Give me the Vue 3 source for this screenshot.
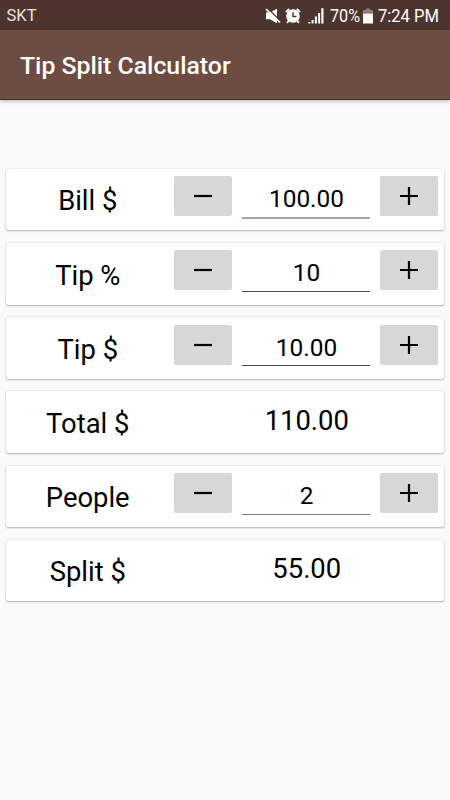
<script setup>
import { computed, ref } from "vue";

const bill = ref(100);
const percent = ref(10);
const people = ref(2);

const tip = computed(() => (bill.value * percent.value) / 100);
const total = computed(() => bill.value + tip.value);

const rows = computed(() => [
  { id: "bill", label: "Bill $", value: bill.value.toFixed(2), editable: true },
  { id: "percent", label: "Tip %", value: String(percent.value), editable: true },
  { id: "tip", label: "Tip $", value: tip.value.toFixed(2), editable: true },
  { id: "total", label: "Total $", value: total.value.toFixed(2) },
  { id: "people", label: "People", value: String(people.value), editable: true },
  { id: "split", label: "Split $", value: (total.value / people.value).toFixed(2) },
]);

function step(id, delta) {
  if (id === "bill") bill.value = Math.max(0, bill.value + delta);
  if (id === "percent") percent.value = Math.max(0, percent.value + delta);
  if (id === "people") people.value = Math.max(1, people.value + delta);
  if (id === "tip" && bill.value > 0) {
    percent.value = (Math.max(0, tip.value + delta) / bill.value) * 100;
  }
}
</script>

<template>
  <div class="screen">
    <div class="status-bar">
      <span class="carrier">SKT</span>
      <svg class="icon-mute" viewBox="0 0 16 16">
        <path d="M1 4.500h4L12 .8v14.400L5 11.200H1z" fill="#fff" />
        <path d="M2.800 .2l13 13.300" stroke="#4e342e" stroke-width="1.200" />
        <path d="M1 1.200l14 13.300" stroke="#fff" stroke-width="1.700" fill="none" />
      </svg>
      <svg class="icon-alarm" viewBox="0 0 16 16">
        <path
          d="M.8 4.200L4.200 1M11.800 1l3.400 3.200M3.800 12.800l-1.800 2M12.200 12.800l1.800 2"
          stroke="#fff"
          stroke-width="1.800"
        />
        <circle cx="8" cy="8" r="6.800" fill="#fff" />
        <path d="M8 4.300v4.200h3.500" stroke="#4e342e" stroke-width="1.400" fill="none" />
      </svg>
      <svg class="icon-signal" viewBox="0 0 16 16">
        <path
          d="M.3 14h2v1.500h-2zM3.600 12h2v3.500h-2zM6.900 8.500h2v7h-2zM10.100 5h2v10.500h-2zM13.300.3h2.200v15.200h-2.200z"
          fill="#fff"
        />
      </svg>
      <span class="battery-level">70%</span>
      <svg class="icon-battery" viewBox="0 0 10 16">
        <path d="M3 .5h4V2h3v4H0V2h3z" fill="#947f7a" />
        <path d="M0 5.700h10V15.500H0z" fill="#fff" />
      </svg>
      <span class="clock">7:24 PM</span>
    </div>

    <header class="app-bar">
      <h1>Tip Split Calculator</h1>
    </header>

    <main class="cards">
      <section v-for="row in rows" :key="row.id" class="card">
        <div class="label">{{ row.label }}</div>
        <template v-if="row.editable">
          <button class="btn" aria-label="Decrease" @click="step(row.id, -1)">
            <svg viewBox="0 0 18 18"><path d="M0 9h18" /></svg>
          </button>
          <div class="field" :class="row.id">{{ row.value }}</div>
          <button class="btn" aria-label="Increase" @click="step(row.id, 1)">
            <svg viewBox="0 0 18 18"><path d="M0 9h18M9 0v18" /></svg>
          </button>
        </template>
        <div v-else class="result">{{ row.value }}</div>
      </section>
    </main>
  </div>
</template>

<style>
body {
  margin: 0;
  background: #fafafa;
}
</style>

<style scoped>
.screen {
  width: 450px;
  height: 800px;
  overflow: hidden;
  background: #fafafa;
  color: #000;
  font-family: Roboto, sans-serif;
}

.status-bar {
  display: flex;
  align-items: center;
  height: 30px;
  padding: 1px 10px 0 6.5px;
  box-sizing: border-box;
  background: #4e342e;
  color: #fff;
  font-size: 18px;
  line-height: 30px;
}

.carrier {
  flex: 1;
  font-size: 16.5px;
  color: #e9e4e3;
}

.icon-mute {
  width: 16px;
  height: 16px;
  margin-right: 4px;
}

.icon-alarm {
  width: 16px;
  height: 16px;
  margin-right: 7px;
}

.icon-signal {
  width: 16px;
  height: 16px;
  margin-right: 5.5px;
}

.battery-level {
  width: 30px;
  margin-right: 3.5px;
  white-space: nowrap;
  transform: scaleX(0.9);
  transform-origin: left;
}

.icon-battery {
  width: 10px;
  height: 16px;
  margin-right: 5px;
}

.clock {
  width: 62px;
  white-space: nowrap;
  transform: scaleX(0.92);
  transform-origin: left;
}

.app-bar {
  display: flex;
  align-items: center;
  height: 70px;
  padding: 3px 20px 0;
  box-sizing: border-box;
  background: #6d4c41;
  border-bottom: 1px solid #5a2b18;
  box-shadow: 0 1px 4px rgba(0, 0, 0, 0.3);
}

h1 {
  margin: 0;
  color: #fff;
  font-size: 24.8px;
  font-weight: 500;
  line-height: 32px;
}

.cards {
  display: flex;
  flex-direction: column;
  gap: 12.5px;
  padding: 68.8px 6px 0;
}

.card {
  display: flex;
  height: 61.7px;
  padding: 0 6px 0 0;
  box-sizing: border-box;
  background: #fff;
  border-radius: 2.5px;
  box-shadow:
    0 1px 2px rgba(0, 0, 0, 0.26),
    0 0 2px rgba(0, 0, 0, 0.15);
}

.label {
  flex: 0 0 163.5px;
  margin-right: 4.5px;
  padding-top: 16.6px;
  font-size: 27.4px;
  line-height: 32px;
  text-align: center;
}

.btn {
  display: grid;
  place-items: center;
  width: 58.5px;
  height: 40px;
  margin-top: 7.4px;
  padding: 0;
  border: none;
  border-radius: 2px;
  background: #d6d8d7;
}

.btn svg {
  width: 18px;
  height: 18px;
}

.btn path {
  fill: none;
  stroke: #000;
  stroke-width: 2.2;
}

.field {
  width: 127.5px;
  height: 49px;
  margin: 0 10px;
  padding: 15.4px 0 0 1px;
  box-sizing: border-box;
  border-bottom: 1px solid #4c4c4c;
  font-size: 24.4px;
  line-height: 30px;
  text-align: center;
}

.field.bill {
  height: 50px;
  border-bottom: 2px solid #b7a29b;
}

.field.people {
  border-bottom-color: #777;
}

.result {
  flex: 1;
  padding: 13.4px 0 0 1.5px;
  font-size: 27.4px;
  line-height: 32px;
  text-align: center;
}
</style>
